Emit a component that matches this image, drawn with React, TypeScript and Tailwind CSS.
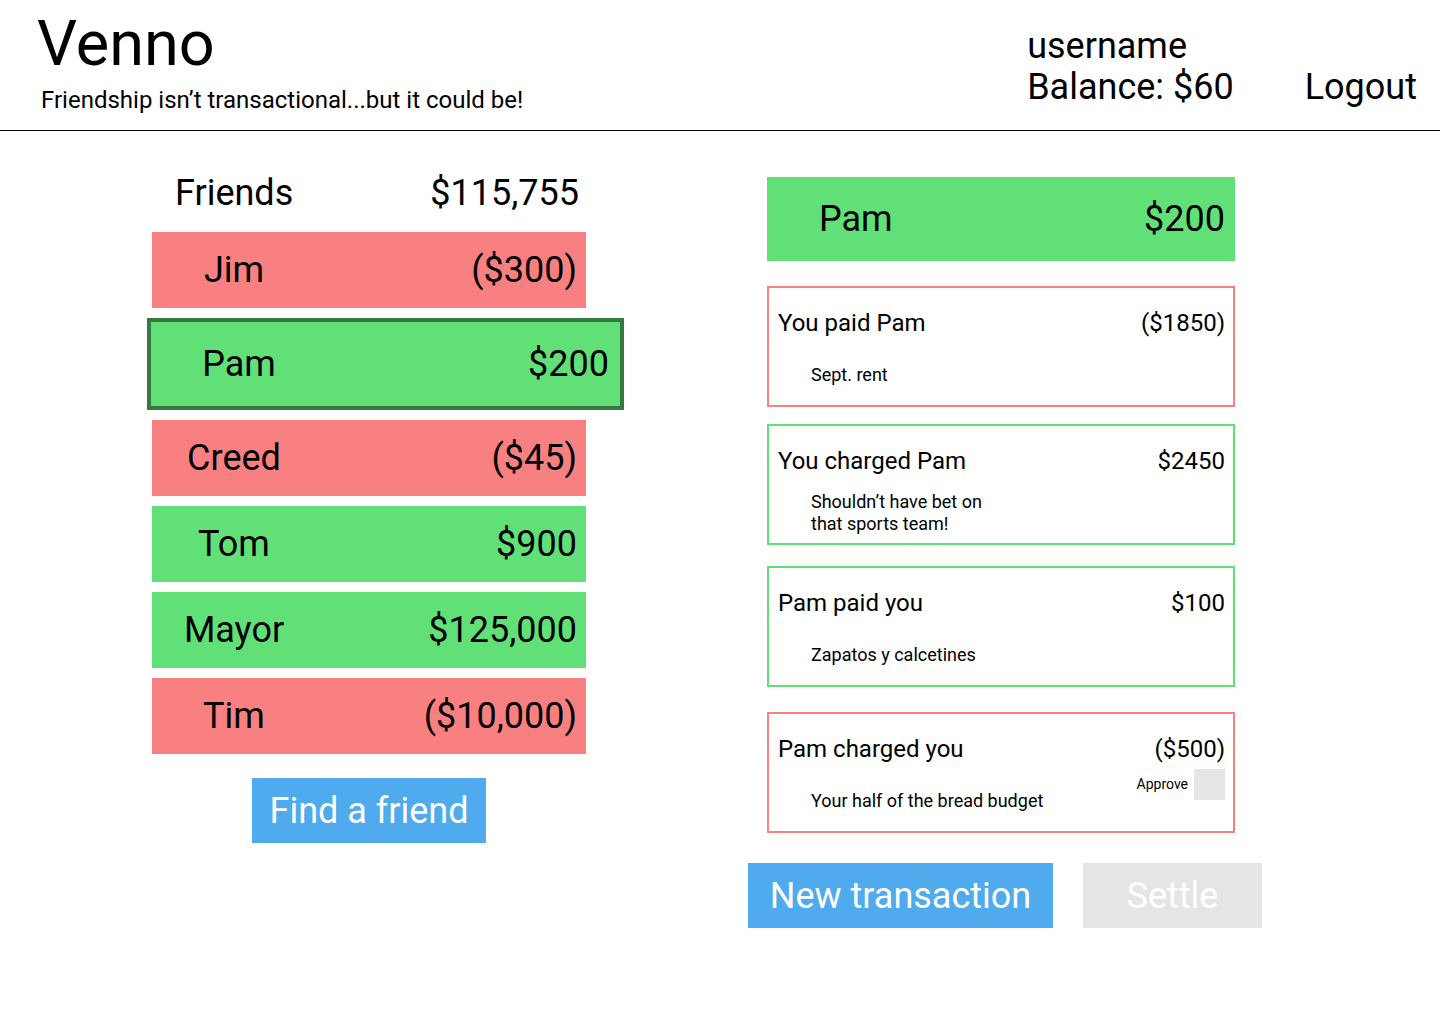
const friends = [
  { name: 'Jim', amount: '($300)', owe: true },
  { name: 'Pam', amount: '$200', owe: false, selected: true },
  { name: 'Creed', amount: '($45)', owe: true },
  { name: 'Tom', amount: '$900', owe: false },
  { name: 'Mayor', amount: '$125,000', owe: false },
  { name: 'Tim', amount: '($10,000)', owe: true },
]

const transactions = [
  { title: 'You paid Pam', amount: '($1850)', note: ['Sept. rent'], owe: true, gap: 'mt-[25px]' },
  {
    title: 'You charged Pam',
    amount: '$2450',
    note: ['Shouldn’t have bet on', 'that sports team!'],
    owe: false,
    gap: 'mt-[17px]',
  },
  { title: 'Pam paid you', amount: '$100', note: ['Zapatos y calcetines'], owe: false, gap: 'mt-[21px]' },
  {
    title: 'Pam charged you',
    amount: '($500)',
    note: ['Your half of the bread budget'],
    owe: true,
    gap: 'mt-[25px]',
    approve: true,
  },
]

function FriendRow({ f }: { f: (typeof friends)[number] }) {
  if (f.selected) {
    return (
      <div className="-ml-[5px] w-[477px] h-[92px] border-[4px] border-[#367a42] bg-[#60e077] flex items-center justify-between pr-[11px]">
        <div className="w-[176px] text-center">{f.name}</div>
        <div>{f.amount}</div>
      </div>
    )
  }
  return (
    <div
      className={`w-[434px] h-[76px] flex items-center justify-between pr-[9px] ${
        f.owe ? 'bg-[#f98080]' : 'bg-[#60e077]'
      }`}
    >
      <div className="w-[164px] text-center">{f.name}</div>
      <div>{f.amount}</div>
    </div>
  )
}

export default function App() {
  return (
    <div className="min-h-screen bg-white text-black font-[Roboto,sans-serif]">
      {/* Header */}
      <header className="h-[131px] border-b border-black flex justify-between pl-[37px] pr-[23px]">
        <div className="pt-[12px]">
          <div className="text-[63px] leading-none">Venno</div>
          <div className="text-[24px] leading-none mt-[13px] pl-[4px]">
            Friendship isn’t transactional...but it could be!
          </div>
        </div>
        <div className="pt-[26px] flex items-end gap-[71px] self-start text-[36px] leading-[41px]">
          <div>
            <div>username</div>
            <div>Balance: $60</div>
          </div>
          <div>Logout</div>
        </div>
      </header>

      <main className="flex pl-[152px]">
        {/* Friends */}
        <section className="w-[434px] shrink-0 pt-[41px] text-[36px] leading-[42px]">
          <div className="flex justify-between pl-[23px] pr-[7px]">
            <span>Friends</span>
            <span>$115,755</span>
          </div>
          <div className="mt-[18px] flex flex-col gap-[10px]">
            {friends.map((f) => (
              <FriendRow key={f.name} f={f} />
            ))}
          </div>
          <div className="mt-[24px] flex justify-center">
            <button className="w-[234px] h-[65px] bg-[#4fabed] text-white">Find a friend</button>
          </div>
        </section>

        {/* Transactions */}
        <section className="ml-[181px] w-[468px] shrink-0 pt-[46px]">
          <div className="h-[84px] bg-[#60e077] flex items-center justify-between pl-[52px] pr-[10px] text-[36px] leading-[42px]">
            <span>Pam</span>
            <span>$200</span>
          </div>
          {transactions.map((t) => (
            <div
              key={t.title}
              className={`${t.gap} h-[121px] border-2 ${
                t.owe ? 'border-[#f98080]' : 'border-[#60e077]'
              } flex justify-between pl-[9px] pr-[8px] pt-[20px]`}
            >
              <div className="flex flex-col">
                <div className="h-[30px] text-[24px] leading-[30px]">{t.title}</div>
                <div className="mt-[15px] h-[44px] flex flex-col justify-center pl-[33px] text-[18px] leading-[22px]">
                  {t.note.map((line) => (
                    <div key={line}>{line}</div>
                  ))}
                </div>
              </div>
              <div className="flex flex-col items-end">
                <div className="h-[30px] text-[24px] leading-[30px]">{t.amount}</div>
                {t.approve && (
                  <div className="mt-[5px] flex items-center gap-[6px]">
                    <span className="text-[14px]">Approve</span>
                    <span className="w-[31px] h-[31px] bg-[#e5e5e5]" />
                  </div>
                )}
              </div>
            </div>
          ))}
          <div className="mt-[30px] -ml-[19px] flex gap-[30px] text-[36px]">
            <button className="w-[305px] h-[65px] shrink-0 bg-[#4fabed] text-white">New transaction</button>
            <button className="w-[179px] h-[65px] shrink-0 bg-[#e5e5e5] text-white">Settle</button>
          </div>
        </section>
      </main>
    </div>
  )
}
